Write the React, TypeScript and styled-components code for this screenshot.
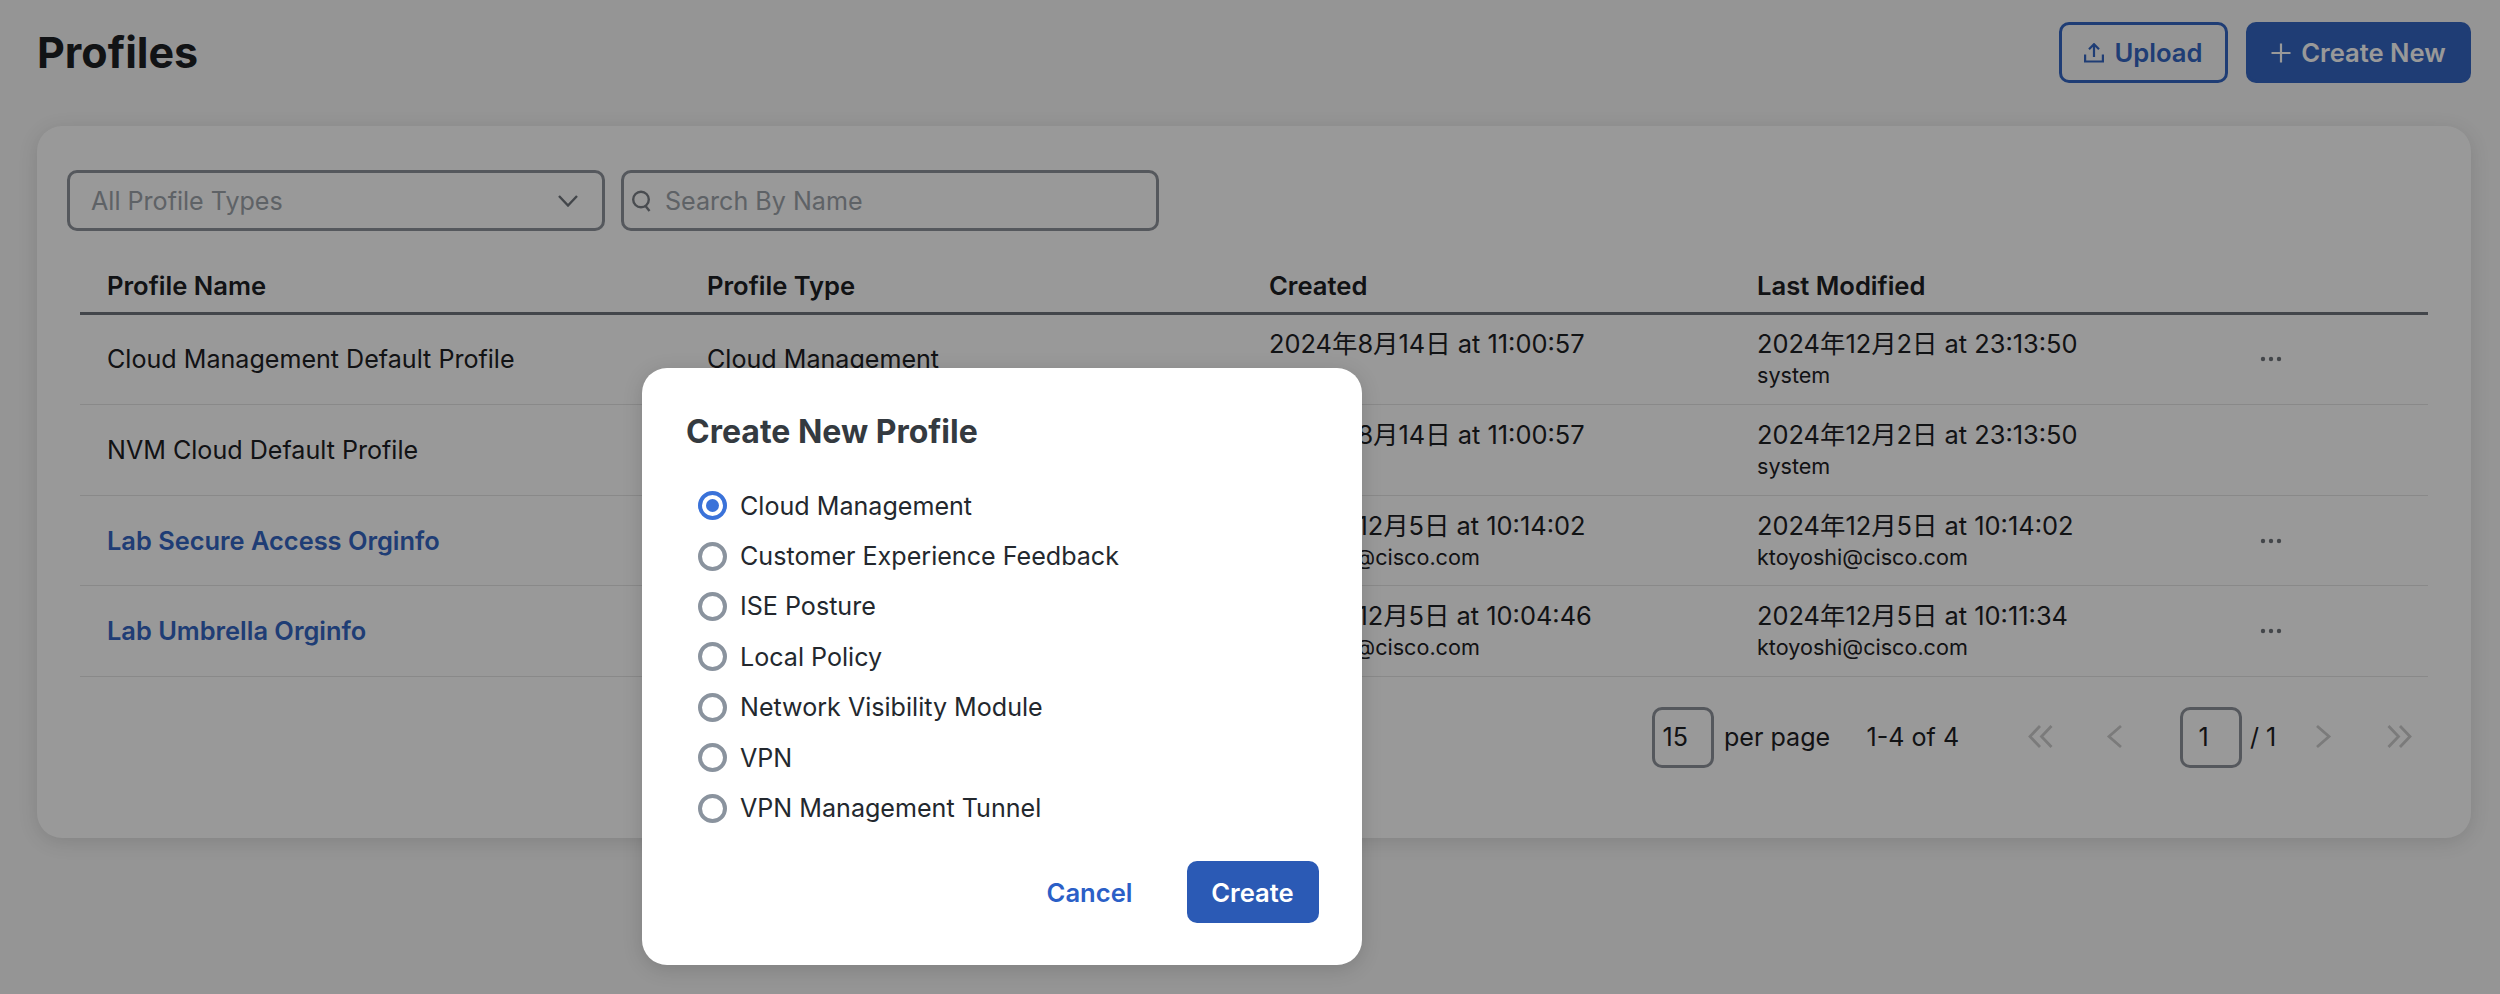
import React from "react";
import styled, { createGlobalStyle } from "styled-components";

const GlobalStyle = createGlobalStyle`
  html, body {
    margin: 0;
    padding: 0;
    background: #f8f8f8;
    font-family: Inter, "Noto Sans CJK JP", "Liberation Sans", sans-serif;
    color: #1d2024;
  }
  * { box-sizing: border-box; }
`;

const Page = styled.div`
  position: relative;
  width: 2500px;
  height: 994px;
  overflow: hidden;
  padding: 22px 29px 0 37px;
`;

const TopBar = styled.header`
  display: flex;
  justify-content: space-between;
  align-items: center;
  height: 61px;
  margin-bottom: 43px;
`;

const Title = styled.h1`
  margin: 0;
  font-size: 43px;
  line-height: 61px;
  font-weight: 700;
`;

const TopActions = styled.div`
  display: flex;
  gap: 18px;
`;

const TopButton = styled.button<{ $solid?: boolean }>`
  display: flex;
  align-items: center;
  justify-content: center;
  gap: 10px;
  height: 61px;
  width: ${(p) => (p.$solid ? "225px" : "169px")};
  border: 3px solid #3466c3;
  border-radius: 10px;
  background: ${(p) => (p.$solid ? "#3466c3" : "transparent")};
  color: ${(p) => (p.$solid ? "#fff" : "#3466c3")};
  font: 600 25.6px Inter, sans-serif;
  svg { flex: none; }
`;

const Card = styled.section`
  height: 712px;
  background: #fff;
  border-radius: 25px;
  box-shadow: 0 4px 20px rgba(0, 0, 0, 0.12);
  padding: 44px 41px 0 30px;
`;

const Filters = styled.div`
  display: flex;
  gap: 16px;
`;

const Field = styled.div`
  display: flex;
  align-items: center;
  width: 538px;
  height: 61px;
  border: 3px solid #8e939b;
  border-radius: 10px;
  font-size: 25.1px;
  color: #9da3aa;
`;

const SelectField = styled(Field)`
  justify-content: space-between;
  padding: 0 24px 0 21px;
  svg { color: #70757c; }
`;

const SearchField = styled(Field)`
  gap: 12px;
  padding-left: 7px;
  svg { color: #7a7f86; }
`;

const Table = styled.div`
  margin: 24px 2px 0 13px;
`;

const Row = styled.div`
  display: grid;
  grid-template-columns: 600px 562px 488px 500px 198px;
  align-items: center;
  height: 90.67px;
  border-bottom: 1.5px solid #e4e4e4;
`;

const HeaderRow = styled(Row)`
  height: 59.5px;
  padding-top: 6px;
  border-bottom: 3px solid #71767d;
  font-weight: 600;
`;

const Cell = styled.div`
  padding-left: 27px;
  font-size: 25.1px;
  line-height: 32px;
  white-space: nowrap;
`;

const HeaderCell = styled(Cell)`
  font-size: 25.6px;
`;

const LinkCell = styled(Cell)`
  font-size: 25.4px;
  color: #3466c3;
  font-weight: 600;
`;

const DateText = styled.div`
  font-size: 25.4px;
`;

const Sub = styled.div`
  font-size: 21.6px;
  line-height: 30px;
`;

const Dots = styled.div`
  padding-left: 26px;
  display: flex;
  color: #70757c;
`;

const Pager = styled.div`
  display: flex;
  align-items: center;
  margin: 29.5px 0 0 1584.5px;
  height: 61px;
  font-size: 25.1px;
`;

const PagerBox = styled.div<{ $mr: number; $pl: number }>`
  width: 62px;
  height: 61px;
  border: 3px solid #8e939b;
  border-radius: 10px;
  display: flex;
  align-items: center;
  padding-left: ${(p) => p.$pl}px;
  margin-right: ${(p) => p.$mr}px;
`;

const PagerText = styled.span<{ $w: number }>`
  width: ${(p) => p.$w}px;
  white-space: nowrap;
`;

const PagerIcon = styled.span<{ $mr?: number }>`
  display: flex;
  justify-content: center;
  color: #cdcdcd;
  margin-right: ${(p) => p.$mr ?? 0}px;
`;

const Overlay = styled.div`
  position: absolute;
  inset: 0;
  background: rgba(0, 0, 0, 0.4);
  padding: 368px 0 0 642px;
`;

const Modal = styled.div`
  width: 720px;
  height: 597px;
  background: #fff;
  border-radius: 25px;
  box-shadow: 0 4px 20px rgba(0, 0, 0, 0.15);
  padding: 43px 43.5px 0 44px;
`;

const ModalTitle = styled.h2`
  margin: 0 0 27.5px;
  font-size: 32px;
  line-height: 42px;
  font-weight: 700;
  color: #343a40;
`;

const RadioList = styled.div`
  display: flex;
  flex-direction: column;
`;

const RadioRow = styled.label`
  display: flex;
  align-items: center;
  gap: 13px;
  height: 50.4px;
  padding-left: 12px;
  font-size: 25.1px;
  color: #23282e;
`;

const RadioDot = styled.span<{ $on?: boolean }>`
  width: 29px;
  height: 29px;
  border-radius: 50%;
  border: 4px solid ${(p) => (p.$on ? "#3a72d9" : "#8a939e")};
  display: flex;
  align-items: center;
  justify-content: center;
  &::after {
    content: "";
    width: 13px;
    height: 13px;
    border-radius: 50%;
    background: ${(p) => (p.$on ? "#3a72d9" : "transparent")};
  }
`;

const ModalActions = styled.div`
  display: flex;
  justify-content: flex-end;
  align-items: center;
  gap: 54px;
  margin-top: 28px;
`;

const CancelButton = styled.button`
  border: 0;
  padding: 0;
  background: none;
  color: #2b5fc7;
  font: 600 25.6px Inter, sans-serif;
`;

const CreateButton = styled.button`
  width: 132px;
  height: 62px;
  border: 0;
  border-radius: 10px;
  background: #2b5ab5;
  color: #fff;
  font: 600 25.6px Inter, sans-serif;
`;

const UploadIcon = () => (
  <svg width="20" height="20" viewBox="0 0 20 20" fill="none" stroke="currentColor" strokeWidth="2.2">
    <path d="M10 14V1.500M5 6.200L10 1.200l5 5" />
    <path d="M1.100 11.500v7h17.800v-7" />
  </svg>
);

const PlusIcon = () => (
  <svg width="20" height="20" viewBox="0 0 20 20" fill="none" stroke="currentColor" strokeWidth="2.2">
    <path d="M10 0.500v19M0.500 10h19" />
  </svg>
);

const ChevronDownIcon = () => (
  <svg width="20" height="12" viewBox="0 0 20 12" fill="none" stroke="currentColor" strokeWidth="2.4">
    <path d="M1 1l9 9.500L19 1" />
  </svg>
);

const SearchIcon = () => (
  <svg width="22" height="22" viewBox="0 0 22 22" fill="none" stroke="currentColor" strokeWidth="2.4">
    <circle cx="10" cy="9.500" r="7.800" />
    <path d="M14.500 16l4 5" />
  </svg>
);

const DotsIcon = () => (
  <svg width="30" height="8" viewBox="0 0 30 8" fill="currentColor">
    <circle cx="7" cy="4" r="2.200" />
    <circle cx="15" cy="4" r="2.200" />
    <circle cx="23" cy="4" r="2.200" />
  </svg>
);

const PagerChevron = ({ d }: { d: string }) => (
  <svg width="28" height="28" viewBox="0 0 28 28" fill="none" stroke="currentColor" strokeWidth="2.800">
    <path d={d} />
  </svg>
);

const rows = [
  { name: "Cloud Management Default Profile", type: "Cloud Management", created: "2024年8月14日 at 11:00:57", createdBy: "system", modified: "2024年12月2日 at 23:13:50", modifiedBy: "system", menu: true },
  { name: "NVM Cloud Default Profile", type: "Network Visibility Module", created: "2024年8月14日 at 11:00:57", createdBy: "system", modified: "2024年12月2日 at 23:13:50", modifiedBy: "system" },
  { name: "Lab Secure Access Orginfo", link: true, type: "Cloud Management", created: "2024年12月5日 at 10:14:02", createdBy: "ktoyoshi@cisco.com", modified: "2024年12月5日 at 10:14:02", modifiedBy: "ktoyoshi@cisco.com", menu: true },
  { name: "Lab Umbrella Orginfo", link: true, type: "Cloud Management", created: "2024年12月5日 at 10:04:46", createdBy: "ktoyoshi@cisco.com", modified: "2024年12月5日 at 10:11:34", modifiedBy: "ktoyoshi@cisco.com", menu: true },
];

const profileTypes = [
  "Cloud Management",
  "Customer Experience Feedback",
  "ISE Posture",
  "Local Policy",
  "Network Visibility Module",
  "VPN",
  "VPN Management Tunnel",
];

export default function App() {
  return (
    <>
      <GlobalStyle />
      <Page>
        <TopBar>
          <Title>Profiles</Title>
          <TopActions>
            <TopButton><UploadIcon />Upload</TopButton>
            <TopButton $solid><PlusIcon />Create New</TopButton>
          </TopActions>
        </TopBar>

        <Card>
          <Filters>
            <SelectField>All Profile Types<ChevronDownIcon /></SelectField>
            <SearchField><SearchIcon />Search By Name</SearchField>
          </Filters>

          <Table>
            <HeaderRow>
              <HeaderCell>Profile Name</HeaderCell>
              <HeaderCell>Profile Type</HeaderCell>
              <HeaderCell>Created</HeaderCell>
              <HeaderCell>Last Modified</HeaderCell>
            </HeaderRow>
            {rows.map((row) => (
              <Row key={row.name}>
                {row.link ? <LinkCell>{row.name}</LinkCell> : <Cell>{row.name}</Cell>}
                <Cell>{row.type}</Cell>
                <Cell><DateText>{row.created}</DateText><Sub>{row.createdBy}</Sub></Cell>
                <Cell><DateText>{row.modified}</DateText><Sub>{row.modifiedBy}</Sub></Cell>
                {row.menu ? <Dots><DotsIcon /></Dots> : <div />}
              </Row>
            ))}
          </Table>

          <Pager>
            <PagerBox $mr={10.5} $pl={8}>15</PagerBox>
            <PagerText $w={142.5}>per page</PagerText>
            <PagerText $w={160}>1-4 of 4</PagerText>
            <PagerIcon $mr={46.5}><PagerChevron d="M13 3L3 13.500l10 10.500M24.500 3l-10 10.500 10 10.500" /></PagerIcon>
            <PagerIcon $mr={50.5}><PagerChevron d="M20 3L8 13.500 20 24" /></PagerIcon>
            <PagerBox $mr={8.5} $pl={16}>1</PagerBox>
            <PagerText $w={58.5}>/ 1</PagerText>
            <PagerIcon $mr={48}><PagerChevron d="M8 3l12 10.500L8 24" /></PagerIcon>
            <PagerIcon><PagerChevron d="M3.500 3l10 10.500-10 10.500M15 3l10 10.500L15 24" /></PagerIcon>
          </Pager>
        </Card>

        <Overlay>
          <Modal>
            <ModalTitle>Create New Profile</ModalTitle>
            <RadioList>
              {profileTypes.map((type, i) => (
                <RadioRow key={type}>
                  <RadioDot $on={i === 0} />
                  {type}
                </RadioRow>
              ))}
            </RadioList>
            <ModalActions>
              <CancelButton>Cancel</CancelButton>
              <CreateButton>Create</CreateButton>
            </ModalActions>
          </Modal>
        </Overlay>
      </Page>
    </>
  );
}
